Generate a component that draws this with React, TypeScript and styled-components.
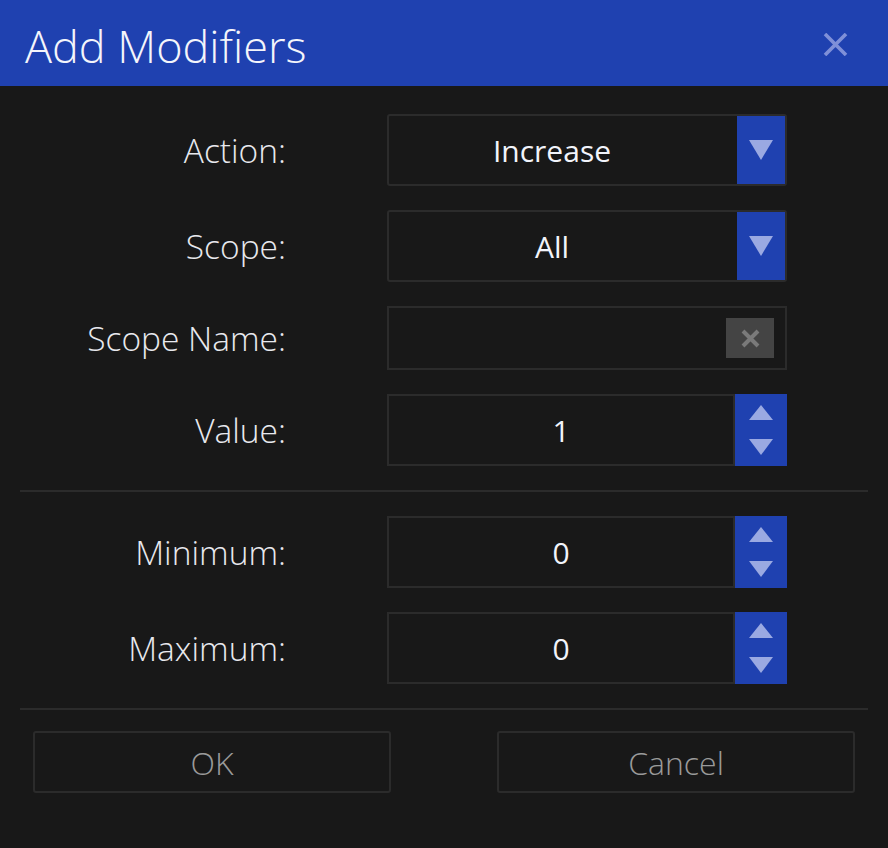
import styled, { createGlobalStyle } from "styled-components";

const BLUE = "#1f41b0";
const BG = "#181818";
const LINE = "#2b2b2b";
const ARROW = "#9aa9e2";

const GlobalStyle = createGlobalStyle`
  html, body {
    margin: 0;
    padding: 0;
    background: ${BG};
  }
  * {
    box-sizing: border-box;
  }
`;

type FieldRow =
  | { kind: "select"; label: string; value: string }
  | { kind: "text"; label: string }
  | { kind: "spin"; label: string; value: string };

const TOP_ROWS: FieldRow[] = [
  { kind: "select", label: "Action:", value: "Increase" },
  { kind: "select", label: "Scope:", value: "All" },
  { kind: "text", label: "Scope Name:" },
  { kind: "spin", label: "Value:", value: "1" },
];

const LIMIT_ROWS: FieldRow[] = [
  { kind: "spin", label: "Minimum:", value: "0" },
  { kind: "spin", label: "Maximum:", value: "0" },
];

const Triangle = ({ dir, w, h }: { dir: "up" | "down"; w: number; h: number }) => (
  <svg width={w} height={h} viewBox={`0 0 ${w} ${h}`}>
    <polygon
      points={dir === "down" ? `0,0 ${w},0 ${w / 2},${h}` : `0,${h} ${w},${h} ${w / 2},0`}
      fill={ARROW}
    />
  </svg>
);

const Field = ({ row }: { row: FieldRow }) => {
  if (row.kind === "select") {
    return (
      <SelectBox>
        <SelectText>{row.value}</SelectText>
        <SelectButton>
          <Triangle dir="down" w={24} h={20} />
        </SelectButton>
      </SelectBox>
    );
  }
  if (row.kind === "text") {
    return (
      <TextBox>
        <ClearButton>
          <svg width="19" height="19" viewBox="0 0 19 19">
            <path d="M2 2 L17 17 M17 2 L2 17" stroke="#7a7a7a" strokeWidth="4" />
          </svg>
        </ClearButton>
      </TextBox>
    );
  }
  return (
    <SpinWrap>
      <SpinInput>{row.value}</SpinInput>
      <SpinButtons>
        <Triangle dir="up" w={24} h={15} />
        <Triangle dir="down" w={24} h={16} />
      </SpinButtons>
    </SpinWrap>
  );
};

const App = () => {
  return (
    <Dialog>
      <GlobalStyle />
      <Header>
        <Title>Add Modifiers</Title>
        <CloseIcon>
          <svg width="25" height="23" viewBox="0 0 25 23">
            <path d="M2 1 L23 22 M23 1 L2 22" stroke="#7f90d8" strokeWidth="3.6" />
          </svg>
        </CloseIcon>
      </Header>
      <Body>
        <Section>
          {TOP_ROWS.map((row) => (
            <Row key={row.label}>
              <Label>{row.label}</Label>
              <Field row={row} />
            </Row>
          ))}
        </Section>
        <Divider />
        <Section>
          {LIMIT_ROWS.map((row) => (
            <Row key={row.label}>
              <Label>{row.label}</Label>
              <Field row={row} />
            </Row>
          ))}
        </Section>
        <Divider />
        <Footer>
          <FooterButton>OK</FooterButton>
          <FooterButton>Cancel</FooterButton>
        </Footer>
      </Body>
    </Dialog>
  );
};

export default App;

const Dialog = styled.div`
  width: 888px;
  height: 848px;
  background: ${BG};
  font-family: "Open Sans", "Noto Sans", sans-serif;
  display: flex;
  flex-direction: column;
`;

const Header = styled.div`
  height: 86px;
  background: ${BLUE};
  display: flex;
  align-items: center;
  justify-content: space-between;
  padding: 0 40px 0 25px;
`;

const Title = styled.h1`
  margin: 0;
  color: #f4f5fb;
  font-size: 45px;
  font-weight: 300;
  line-height: 1;
  padding-top: 4px;
`;

const CloseIcon = styled.div`
  display: flex;
  align-items: center;
  padding-top: 2px;
`;

const Body = styled.div`
  display: flex;
  flex-direction: column;
  padding-top: 28px;
`;

const Section = styled.div`
  display: flex;
  flex-direction: column;
  gap: 24px;
`;

const Row = styled.div`
  display: flex;
  align-items: center;
`;

const Label = styled.div`
  width: 286px;
  margin-right: 101px;
  text-align: right;
  color: #e8e9ee;
  font-size: 33.5px;
  font-weight: 300;
`;

const SelectBox = styled.div`
  width: 400px;
  height: 72px;
  border: 2px solid ${LINE};
  border-radius: 3px;
  display: flex;
`;

const SelectText = styled.div`
  flex: 1;
  display: flex;
  align-items: center;
  justify-content: center;
  padding-right: 22px;
  color: #f2f4fb;
  font-size: 30px;
  font-weight: 400;
`;

const SelectButton = styled.div`
  width: 48px;
  background: ${BLUE};
  display: flex;
  align-items: center;
  justify-content: center;
`;

const TextBox = styled.div`
  width: 400px;
  height: 64px;
  border: 2px solid ${LINE};
  display: flex;
  align-items: center;
  justify-content: flex-end;
  padding-right: 11px;
`;

const ClearButton = styled.div`
  width: 48px;
  height: 40px;
  background: #444444;
  display: flex;
  align-items: center;
  justify-content: center;
`;

const SpinWrap = styled.div`
  width: 400px;
  height: 72px;
  display: flex;
`;

const SpinInput = styled.div`
  flex: 1;
  border: 2px solid ${LINE};
  display: flex;
  align-items: center;
  justify-content: center;
  color: #f2f4fb;
  font-size: 30px;
`;

const SpinButtons = styled.div`
  width: 52px;
  background: ${BLUE};
  display: flex;
  flex-direction: column;
  align-items: center;
  justify-content: center;
  gap: 19px;
`;

const Divider = styled.div`
  height: 2px;
  margin: 24px 20px;
  background: ${LINE};
`;

const Footer = styled.div`
  display: flex;
  justify-content: space-between;
  padding: 0 33px;
  margin-top: -3px;
`;

const FooterButton = styled.div`
  width: 358px;
  height: 62px;
  border: 2px solid ${LINE};
  border-radius: 3px;
  display: flex;
  align-items: center;
  justify-content: center;
  color: #9a9a9a;
  font-size: 32px;
  font-weight: 300;
`;
